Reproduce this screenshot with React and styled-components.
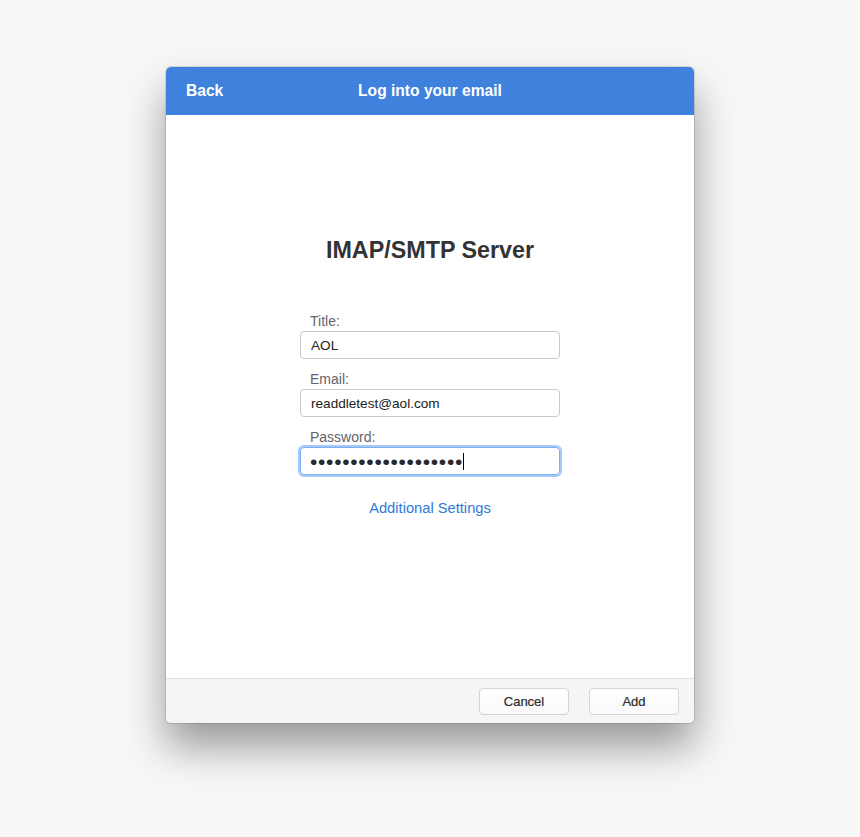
import React from 'react';
import styled, { createGlobalStyle } from 'styled-components';

const GlobalStyle = createGlobalStyle`
  html, body {
    margin: 0;
    padding: 0;
    background: #f7f7f7;
    font-family: "Liberation Sans", Arial, sans-serif;
  }
`;

export default function App() {
  return (
    <>
      <GlobalStyle />
      <Page>
        <Window>
          <Header>
            <BackButton>Back</BackButton>
            <HeaderTitle>Log into your email</HeaderTitle>
            <HeaderSpacer />
          </Header>

          <Body>
            <Heading>IMAP/SMTP Server</Heading>
            <Form>
              <Group>
                <Label>Title:</Label>
                <Input readOnly value="AOL" />
              </Group>
              <Group>
                <Label>Email:</Label>
                <Input readOnly value="readdletest@aol.com" />
              </Group>
              <Group>
                <Label>Password:</Label>
                <PasswordBox focused>
                  <Dots>{'•'.repeat(19)}</Dots>
                  <Caret />
                </PasswordBox>
              </Group>
            </Form>
            <LinkButton>Additional Settings</LinkButton>
          </Body>

          <Footer>
            <Button>Cancel</Button>
            <Button>Add</Button>
          </Footer>
        </Window>
      </Page>
    </>
  );
}

const Page = styled.div`
  display: flex;
  justify-content: center;
  padding-top: 67px;
  height: 837px;
  box-sizing: border-box;
`;

const Window = styled.div`
  width: 528px;
  height: 656px;
  display: flex;
  flex-direction: column;
  background: #fff;
  border-radius: 5px;
  overflow: hidden;
  box-shadow: 0 0 0 1px rgba(0, 0, 0, 0.12), 0 24px 40px rgba(0, 0, 0, 0.38);
`;

const Header = styled.div`
  height: 48px;
  flex: none;
  background: #3f82de;
  display: flex;
  align-items: center;
  padding: 0 20px;
  color: #fff;
  font-weight: bold;
  font-size: 15.6px;
`;

const BackButton = styled.span`
  width: 90px;
  cursor: pointer;
`;

const HeaderTitle = styled.span`
  flex: 1;
  text-align: center;
`;

const HeaderSpacer = styled.span`
  width: 90px;
`;

const Body = styled.div`
  flex: 1;
  display: flex;
  flex-direction: column;
  align-items: center;
  padding-top: 120px;
`;

const Heading = styled.h1`
  margin: 0 0 47px;
  font-size: 23.3px;
  line-height: 30px;
  font-weight: bold;
  color: #333;
`;

const Form = styled.div`
  width: 260px;
  display: flex;
  flex-direction: column;
  gap: 11px;
`;

const Group = styled.div`
  display: flex;
  flex-direction: column;
  gap: 1px;
`;

const Label = styled.label`
  padding-left: 10px;
  font-size: 14px;
  line-height: 18px;
  color: #62666e;
`;

const Input = styled.input`
  box-sizing: border-box;
  width: 100%;
  height: 28px;
  padding: 0 10px;
  border: 1px solid #c9c9c9;
  border-radius: 4px;
  font-family: inherit;
  font-size: 13.6px;
  color: #222;
  background: #fff;
  outline: none;
`;

const PasswordBox = styled.div`
  box-sizing: border-box;
  height: 28px;
  padding: 0 9px;
  display: flex;
  align-items: center;
  border: 1px solid ${p => (p.focused ? '#7aaef0' : '#c9c9c9')};
  border-radius: 4px;
  box-shadow: ${p => (p.focused ? '0 0 0 2px #a7c9f6' : 'none')};
`;

const Dots = styled.span`
  font-size: 21px;
  letter-spacing: 0.7px;
  color: #2a2a2a;
  line-height: 1;
`;

const Caret = styled.span`
  width: 1px;
  height: 17px;
  background: #000;
  margin-left: 0;
`;

const LinkButton = styled.a`
  margin-top: 24px;
  font-size: 14.7px;
  line-height: 18px;
  color: #2f7ad8;
  cursor: pointer;
`;

const Footer = styled.div`
  height: 45px;
  flex: none;
  box-sizing: border-box;
  border-top: 1px solid #e2e2e2;
  background: #f5f5f5;
  display: flex;
  justify-content: flex-end;
  align-items: center;
  gap: 20px;
  padding: 0 15px;
`;

const Button = styled.button`
  width: 90px;
  height: 27px;
  border: 1px solid #d4d4d4;
  border-radius: 4px;
  background: linear-gradient(#ffffff, #f9f9f9);
  font-family: inherit;
  font-size: 13px;
  font-weight: 500;
  color: #2b2b2b;
  cursor: pointer;
  -webkit-text-stroke: 0.2px #2b2b2b;
`;
